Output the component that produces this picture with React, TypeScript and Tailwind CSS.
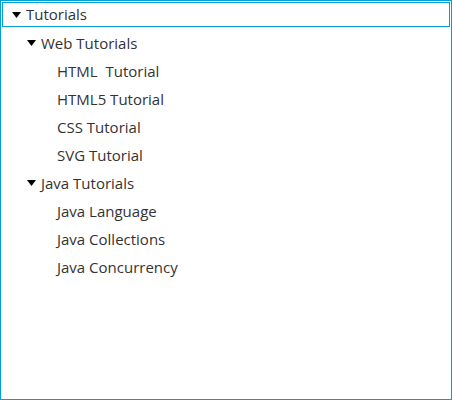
import React from "react";

type Node = { label: string; children?: Node[] };

const tree: Node = {
  label: "Tutorials",
  children: [
    {
      label: "Web Tutorials",
      children: [
        { label: "HTML\u00a0 Tutorial" },
        { label: "HTML5 Tutorial" },
        { label: "CSS Tutorial" },
        { label: "SVG Tutorial" },
      ],
    },
    {
      label: "Java Tutorials",
      children: [
        { label: "Java Language" },
        { label: "Java Collections" },
        { label: "Java Concurrency" },
      ],
    },
  ],
};

const indents = [0, 15, 31];

function Arrow() {
  return (
    <svg width="9" height="6" viewBox="0 0 9 6" className="shrink-0 ml-[9px] mr-[5px]">
      <polygon points="0,0 9,0 4.5,6" fill="#000" />
    </svg>
  );
}

function Content({ node, depth }: { node: Node; depth: number }) {
  return (
    <div className="flex items-center h-full" style={{ paddingLeft: indents[depth] }}>
      {node.children ? <Arrow /> : <div className="w-[23px] shrink-0" />}
      <span className="text-[15px] text-[#333] whitespace-pre leading-none">{node.label}</span>
    </div>
  );
}

function Row({ node, depth }: { node: Node; depth: number }) {
  return (
    <>
      {depth === 0 ? (
        <div className="h-[28px] pt-px px-px">
          <div className="h-[25px] border border-[#039ed3]">
            <Content node={node} depth={depth} />
          </div>
        </div>
      ) : (
        <div className="h-[28px] px-[2px]">
          <Content node={node} depth={depth} />
        </div>
      )}
      {node.children?.map((c, i) => (
        <Row key={i} node={c} depth={depth + 1} />
      ))}
    </>
  );
}

export default function App() {
  return (
    <div
      className="w-[452px] h-[400px] bg-white border border-[#039ed3]"
      style={{ fontFamily: '"Open Sans", "Noto Sans", sans-serif' }}
    >
      <Row node={tree} depth={0} />
    </div>
  );
}
